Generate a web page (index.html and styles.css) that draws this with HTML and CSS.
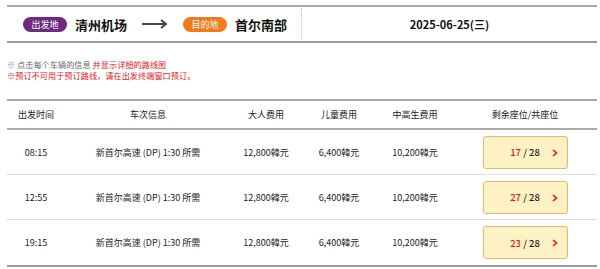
FILE: index.html
```html
<!DOCTYPE html>
<html lang="zh">
<head>
<meta charset="utf-8">
<link rel="stylesheet" href="styles.css">
</head>
<body>
<div class="page">
  <div class="top">
    <div class="route">
      <span class="badge badge-from">出发地</span>
      <span class="place">清州机场</span>
      <svg class="arrow" width="26" height="10" viewBox="0 0 26 10"><path d="M0 5H24M19 1L24 5L19 9" fill="none" stroke="#444" stroke-width="2"/></svg>
      <span class="badge badge-to">目的地</span>
      <span class="place">首尔南部</span>
    </div>
    <div class="date">2025-06-25(三)</div>
  </div>
  <div class="notes">
    <p class="note"><span class="mark">※</span> 点击每个车辆的信息 <span class="red">并显示详细的路线图</span></p>
    <p class="note red">※预订不可用于预订路线，请在出发终端窗口预订。</p>
  </div>
  <div class="table">
    <div class="row head">
      <div>出发时间</div><div>车次信息</div><div>大人费用</div><div>儿童费用</div><div>中高生费用</div><div>剩余座位/共座位</div>
    </div>
    <div class="row">
      <div>08:15</div><div>新首尔高速 (DP) 1:30 所需</div><div>12,800韓元</div><div>6,400韓元</div><div>10,200韓元</div>
      <div><span class="seat"><span class="seat-num"><span class="red">17</span> / 28</span><svg class="chev" width="6" height="8" viewBox="0 0 6 8"><path d="M1 1L4.5 4L1 7" fill="none" stroke="#e8141e" stroke-width="1.6"/></svg></span></div>
    </div>
    <div class="row">
      <div>12:55</div><div>新首尔高速 (DP) 1:30 所需</div><div>12,800韓元</div><div>6,400韓元</div><div>10,200韓元</div>
      <div><span class="seat"><span class="seat-num"><span class="red">27</span> / 28</span><svg class="chev" width="6" height="8" viewBox="0 0 6 8"><path d="M1 1L4.5 4L1 7" fill="none" stroke="#e8141e" stroke-width="1.6"/></svg></span></div>
    </div>
    <div class="row last">
      <div>19:15</div><div>新首尔高速 (DP) 1:30 所需</div><div>12,800韓元</div><div>6,400韓元</div><div>10,200韓元</div>
      <div><span class="seat"><span class="seat-num"><span class="red">23</span> / 28</span><svg class="chev" width="6" height="8" viewBox="0 0 6 8"><path d="M1 1L4.5 4L1 7" fill="none" stroke="#e8141e" stroke-width="1.6"/></svg></span></div>
    </div>
  </div>
</div>
</body>
</html>
```
FILE: styles.css
```css
* { box-sizing: border-box; }
body {
  margin: 0;
  background: #fff;
  font-family: "Noto Sans CJK SC", "Noto Sans", sans-serif;
  color: #222;
}
.page {
  width: 590px;
  margin-left: 7px;
}
.top {
  margin-top: 5px;
  height: 38px;
  border-top: 2px solid #aaa;
  border-bottom: 2px solid #999;
  display: flex;
}
.route {
  width: 295px;
  display: flex;
  align-items: center;
  padding-left: 16px;
  border-right: 1px dotted #bbb;
  margin: 1px 0;
}
.badge {
  display: inline-flex;
  align-items: center;
  justify-content: center;
  width: 44px;
  height: 15px;
  border-radius: 8px;
  color: #fff;
  font-size: 9px;
  line-height: 1;
}
.badge-from { background: #6e2a7e; }
.badge-to { background: #f27a1a; }
.place {
  font-size: 13px;
  font-weight: 700;
  color: #111;
  margin-left: 8px;
}
.arrow {
  margin: 0 15px;
}
.date {
  flex: 1;
  display: flex;
  align-items: center;
  justify-content: center;
  font-size: 11px;
  font-weight: 600;
  color: #111;
}
.notes {
  padding-top: 16px;
  height: 56px;
}
.note {
  margin: 0;
  font-size: 8.2px;
  line-height: 11px;
  color: #666;
}
.mark { color: #6a8fb5; }
.red { color: #e8141e; }
.table {
  border-top: 2px solid #aaa;
  border-bottom: 2px solid #999;
}
.row {
  display: grid;
  grid-template-columns: 58px 166px 70px 76px 76px 144px;
  align-items: center;
  height: 45px;
  border-bottom: 1px solid #ddd;
  font-size: 9px;
  color: #222;
}
.row > div { text-align: center; }
.row.head {
  height: 29px;
  border-bottom: 2px solid #aaa;
}
.row.last { border-bottom: none; }
.seat {
  display: inline-flex;
  align-items: center;
  justify-content: center;
  position: relative;
  width: 85px;
  height: 33px;
  background: #fdf2c6;
  border: 1px solid #f3b466;
  border-radius: 3px;
  font-size: 9.5px;
  font-weight: 500;
  color: #222;
}
.chev {
  position: absolute;
  right: 9px;
  top: 12px;
}
```
